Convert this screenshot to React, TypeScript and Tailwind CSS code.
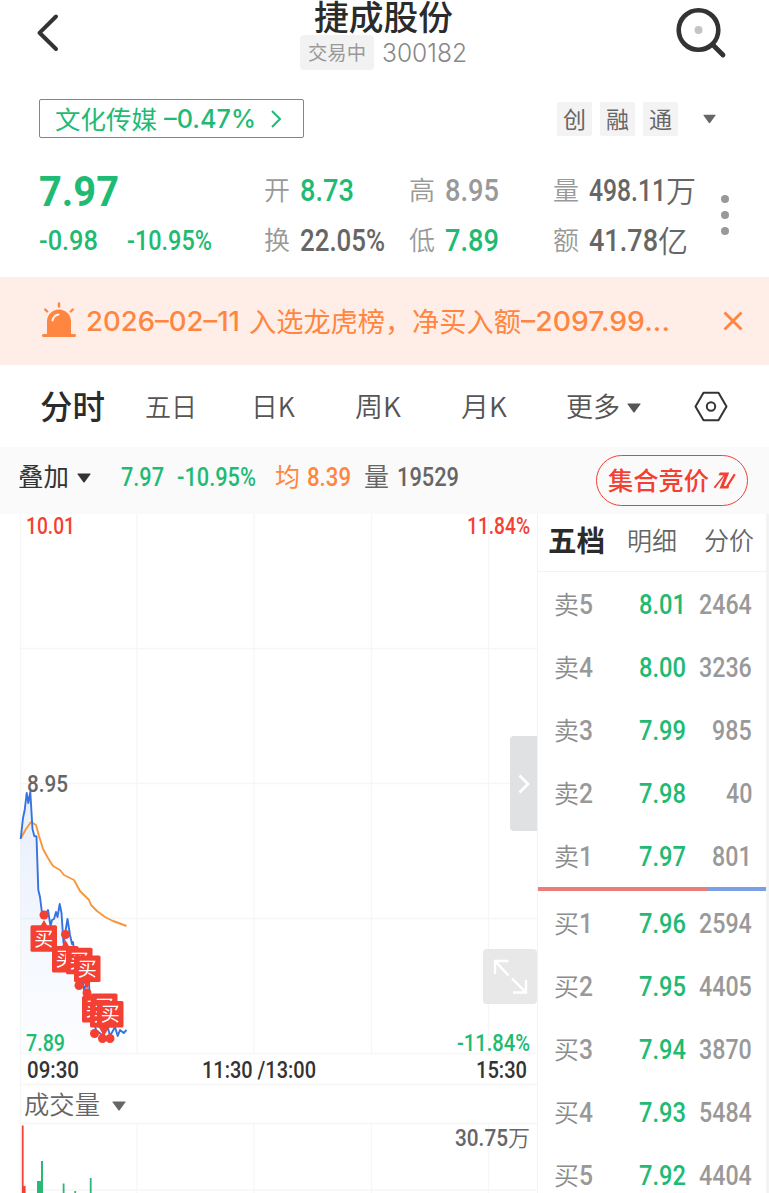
import { useLayoutEffect, useRef, useState, type ReactNode } from "react";

/* Text set to a given width: the glyphs are condensed or widened to fill it. */
function Fit({ w, className = "", children }: { w: number; className?: string; children: ReactNode }) {
  const ref = useRef<HTMLSpanElement>(null);
  const [scale, setScale] = useState(1);
  useLayoutEffect(() => {
    if (ref.current && ref.current.offsetWidth) setScale(w / ref.current.getBoundingClientRect().width * scale);
  }, [w]);
  return (
    <span className={`block shrink-0 leading-none whitespace-nowrap ${className}`} style={{ width: w }}>
      <span ref={ref} className="inline-block origin-left" style={{ transform: `scaleX(${scale})` }}>
        {children}
      </span>
    </span>
  );
}

const DIN = "font-['Roboto','Noto_Sans_CJK_SC',sans-serif]";
const NUM = `${DIN} font-medium`;
const LABEL = "pb-[3px] font-[350]";

function Caret({ className }: { className: string }) {
  return (
    <svg viewBox="0 0 14 10" className={className} fill="currentColor">
      <path d="M1 0.5h12q.8 0 .4.8L7.8 9q-.8 1-1.6 0L.6 1.3Q.2.5 1 .5Z" />
    </svg>
  );
}

function Header() {
  return (
    <header className="flex h-[84px] shrink-0 justify-between">
      <svg className="mt-[12px] ml-[36px] h-[42px] w-[26px]" viewBox="0 0 26 42" fill="none" stroke="#333" strokeWidth="4" strokeLinecap="round" strokeLinejoin="round">
        <path d="M20 4.500L3.500 20.800L20 37" />
      </svg>
      <div className="ml-[31px] flex flex-col items-center">
        <Fit w={139} className="mt-[-1px] text-[34px] font-medium text-[#2b2b2b]">捷成股份</Fit>
        <div className="mt-[2px] flex items-center">
          <span className="flex h-[35px] w-[74px] items-center justify-center rounded-[4px] bg-[#f2f2f2]">
            <Fit w={58} className="pb-[2px] text-[19px] text-[#999]">交易中</Fit>
          </span>
          <Fit w={85} className="mt-[2px] ml-[8px] font-['Inter'] text-[25px] font-light text-[#888]">300182</Fit>
        </div>
      </div>
      <svg className="mt-[4px] mr-[39px] h-[56px] w-[56px]" viewBox="0 0 56 56" fill="none" stroke="#333" strokeLinecap="round">
        <circle cx="24.500" cy="26" r="19.800" strokeWidth="4.600" />
        <path d="M38.500 40.500L49 51" strokeWidth="4.800" />
        <circle cx="24.500" cy="26" r="4" fill="#c4c4c4" stroke="none" />
      </svg>
    </header>
  );
}

function SectorRow() {
  return (
    <div className="flex h-[70px] shrink-0 items-center pb-[1px] pl-[39px]">
      <div className="flex h-[39px] w-[265px] items-center rounded-[2px] border-[1.5px] border-current pl-[15px] text-[#1fba73]">
        <Fit w={102} className="pb-[1px] text-[25px]">文化传媒</Fit>
        <Fit w={92} className="mt-[2px] ml-[7px] font-['Inter'] text-[25px] font-[450]">–0.47%</Fit>
        <svg className="mt-[1px] ml-[14px] h-[18px] w-[12px]" viewBox="0 0 12 18" fill="none" stroke="currentColor" strokeWidth="2">
          <path d="M2 1L10 9L2 17" />
        </svg>
      </div>
      <div className="ml-[253px] flex gap-[8px] text-[#666]">
        {["创", "融", "通"].map((t) => (
          <span key={t} className="flex h-[34px] w-[35px] items-center justify-center rounded-[2px] bg-[#f3f3f3] pb-[1px] text-[23px] leading-none">
            {t}
          </span>
        ))}
      </div>
      <Caret className="ml-[25px] h-[10px] w-[13px] text-[#666]" />
    </div>
  );
}

function Stat({ label, w, value, unit, color }: { label: string; w: number; value: string; unit?: string; color: string }) {
  return (
    <div className="flex h-[50px] items-center">
      <Fit w={26} className={`${LABEL} text-[26px] text-[#999]`}>{label}</Fit>
      <Fit w={w} className={`${NUM} ml-[10px] text-[32px] ${color}`}>{value}</Fit>
      {unit && <Fit w={30} className={`${LABEL} text-[30px] ${color}`}>{unit}</Fit>}
    </div>
  );
}

function Quote() {
  return (
    <section className="flex h-[123px] shrink-0 pt-[11px] pl-[39px]">
      <div className="w-[225px] pt-[1px] text-[#1fba73]">
        <div className="flex h-[50px] items-center">
          <Fit w={80} className={`${DIN} text-[43px] font-bold`}>7.97</Fit>
        </div>
        <div className="flex h-[50px] items-center">
          <Fit w={59} className={`${NUM} text-[27px]`}>-0.98</Fit>
          <Fit w={85} className={`${NUM} ml-[29px] text-[27px]`}>-10.95%</Fit>
        </div>
      </div>
      <div className="w-[145px]">
        <Stat label="开" w={54} value="8.73" color="text-[#1fba73]" />
        <Stat label="换" w={85} value="22.05%" color="text-[#666]" />
      </div>
      <div className="w-[144px]">
        <Stat label="高" w={54} value="8.95" color="text-[#999]" />
        <Stat label="低" w={54} value="7.89" color="text-[#1fba73]" />
      </div>
      <div className="w-[168px]">
        <Stat label="量" w={77} value="498.11" unit="万" color="text-[#666]" />
        <Stat label="额" w={69} value="41.78" unit="亿" color="text-[#666]" />
      </div>
      <div className="flex flex-col gap-[8px] pt-[30px]">
        <i className="size-[8px] rounded-full bg-[#999]" />
        <i className="size-[8px] rounded-full bg-[#999]" />
        <i className="size-[8px] rounded-full bg-[#999]" />
      </div>
    </section>
  );
}

function Banner() {
  return (
    <div className="flex h-[88px] shrink-0 items-center bg-[#ffeee7] pl-[41px] text-[#ff8640]">
      <svg className="mb-[2px] h-[36px] w-[36px]" viewBox="0 0 36 36" fill="currentColor">
        <rect x="1" y="32" width="34" height="3" rx="1.500" />
        <path d="M6 32.500V19.500a12 12 0 0 1 24 0v13z" />
        <path d="M11.500 18.500q1-5 6-6" stroke="#ffeee7" strokeWidth="2.200" strokeLinecap="round" fill="none" />
        <path d="M18 1.500v3M4.200 7.500l2 2M31.800 7.500l-2 2" stroke="currentColor" strokeWidth="2.400" strokeLinecap="round" />
      </svg>
      <Fit w={154} className="mt-[1px] ml-[9px] font-['Inter'] text-[27px] font-[450]">2026–02–11</Fit>
      <Fit w={136} className="ml-[9px] pb-[1px] text-[27px]">入选龙虎榜</Fit>
      <Fit w={27} className="pb-[1px] text-[27px]">，</Fit>
      <Fit w={109} className="pb-[1px] text-[27px]">净买入额</Fit>
      <Fit w={149} className="mt-[1px] font-['Inter'] text-[27px] font-[450]">–2097.99...</Fit>
      <svg className="ml-[53px] h-[20px] w-[20px]" viewBox="0 0 20 20" stroke="currentColor" strokeWidth="2.900">
        <path d="M1.500 1.500l17 17M18.500 1.500l-17 17" />
      </svg>
    </div>
  );
}

function PeriodTabs() {
  return (
    <nav className="flex h-[82px] shrink-0 items-center pt-[2px] pl-[40px] text-[#555]">
      <Fit w={65} className="pb-[3px] text-[33px] font-medium text-[#2b2b2b]">分时</Fit>
      <Fit w={52} className={`${LABEL} ml-[40px] text-[26px]`}>五日</Fit>
      <Fit w={44} className={`${LABEL} ml-[54px] text-[27px]`}>日K</Fit>
      <Fit w={46} className={`${LABEL} ml-[60px] text-[27px]`}>周K</Fit>
      <Fit w={46} className={`${LABEL} ml-[60px] text-[27px]`}>月K</Fit>
      <Fit w={54} className={`${LABEL} ml-[59px] text-[27px]`}>更多</Fit>
      <Caret className="mt-[1px] ml-[7px] h-[10px] w-[14px]" />
      <svg className="mb-[2px] ml-[53px] h-[31px] w-[34px]" viewBox="0 0 34 31" fill="none" stroke="#333" strokeWidth="2" strokeLinejoin="round">
        <path d="M9.500 1.700h15L32.500 15.500L24.500 29.200h-15L1.500 15.500Z" />
        <circle cx="17" cy="15.500" r="4.200" />
      </svg>
    </nav>
  );
}

function InfoBar() {
  return (
    <div className="flex h-[67px] shrink-0 items-center bg-[#fafafa] pl-[18px]">
      <div className="flex h-[60px] items-center pb-[7px]">
        <Fit w={51} className="pb-[3px] text-[25px] text-[#333]">叠加</Fit>
        <Caret className="mt-[2px] ml-[8px] h-[10px] w-[14px] text-[#333]" />
        <Fit w={43} className={`${NUM} ml-[30px] text-[26px] text-[#1fba73]`}>7.97</Fit>
        <Fit w={79} className={`${NUM} ml-[13px] text-[26px] text-[#1fba73]`}>-10.95%</Fit>
        <Fit w={25} className="ml-[19px] pb-[3px] text-[25px] text-[#ff8640]">均</Fit>
        <Fit w={44} className={`${NUM} ml-[7px] text-[26px] text-[#ff8640]`}>8.39</Fit>
        <Fit w={25} className="ml-[13px] pb-[3px] text-[25px] text-[#666]">量</Fit>
        <Fit w={62} className={`${NUM} ml-[8px] text-[26px] text-[#666]`}>19529</Fit>
      </div>
      <div className="mb-[1px] ml-[137px] flex h-[51px] w-[152px] items-center rounded-full border border-[#f43f33] pl-[11px] text-[#f43f33]">
        <Fit w={101} className="pb-[2px] text-[25px] font-medium">集合竞价</Fit>
        <svg className="ml-[4px] h-[19px] w-[24px]" viewBox="0 0 24 19" fill="currentColor">
          <path d="M0.500 16.200L10.500 4.200H5.500L6.800 1.500H16.200L10.800 15H16.200L15.200 17.500H6.500L11.500 5L2.300 17.200ZM20.800 2.800L22.800 3.800L14.200 17.200L12.500 15.800Z" />
        </svg>
      </div>
    </div>
  );
}

function Chart() {
  const v = [20.5, 137, 254, 371.5, 488.5];
  return (
    <div className="relative h-[679px] w-[537px] shrink-0">
      <svg className="block h-[679px] w-[537px]" viewBox="0 514 537 679" fill="none">
        <defs>
          <linearGradient id="area" x1="0" y1="790" x2="0" y2="1053" gradientUnits="userSpaceOnUse">
            <stop offset="0" stopColor="#3b78e7" stopOpacity="0.12" />
            <stop offset="1" stopColor="#3b78e7" stopOpacity="0.01" />
          </linearGradient>
        </defs>
        <g stroke="#f6f6f6" strokeWidth="1.300">
          {v.map((x) => <path key={x} d={`M${x} 514V1053M${x} 1123V1193`} />)}
          <path d="M20.500 1053V1123" />
          {[648.5, 783.5, 918.5, 1053.5, 1084.5, 1123.5, 1190].map((y) => <path key={y} d={`M20 ${y}H538`} />)}
        </g>
        <path fill="url(#area)" d={`${PRICE}V1053H20.700Z`} />
        <path stroke="#f9963b" strokeWidth="1.900" strokeLinejoin="round" d="M21 838L26 829L31 822L36 825L39 836L43 849L48 858L53 866L60 870L64 875L74 880L80 891L89 900L91 905L97 911L105 917L113 921L120 923.500L126.500 926" />
        <path stroke="#3673e0" strokeWidth="1.900" strokeLinejoin="round" d={PRICE} />
        <g fill="#f43f33">
          {DOTS.map(([x, y]) => <circle key={`${x}-${y}`} cx={x} cy={y} r="4.500" />)}
          <path d="M44 920l4 7h-8zM65.500 940l4 7h-8zM87 989l-4-8h8zM104 1036l-6-10h12z" />
        </g>
        {BUYS.map(([x, y]) => (
          <g key={`${x}-${y}`}>
            <rect x={x} y={y} width="26.500" height="26.500" rx="1.500" fill="#f43f33" />
            <text x={x + 13.2} y={y + 20.3} textAnchor="middle" fill="#fff" className="text-[19px]">买</text>
          </g>
        ))}
        <path fill="#f43f33" d="M21.800 1125.500h1.800V1186h2V1193h-3.800z" />
        <path fill="#2bb876" d="M37 1181h4v-20h2v32h-6zM62.700 1183.500h1.800v10h-1.800zM74.300 1191h1.800v2h-1.800zM89.800 1178h1.800v15h-1.800z" />
      </svg>
      <Fit w={49} className={`${NUM} absolute top-[0px] left-[26px] text-[24px] text-[#f43f33]`}>10.01</Fit>
      <Fit w={63} className={`${NUM} absolute top-[0px] left-[467px] text-[24px] text-[#f43f33]`}>11.84%</Fit>
      <Fit w={41} className={`${NUM} absolute top-[258px] left-[27px] text-[24px] text-[#666]`}>8.95</Fit>
      <Fit w={39} className={`${NUM} absolute top-[517px] left-[26px] text-[24px] text-[#1fba73]`}>7.89</Fit>
      <Fit w={73} className={`${NUM} absolute top-[517px] left-[457px] text-[24px] text-[#1fba73]`}>-11.84%</Fit>
      <Fit w={52} className={`${NUM} absolute top-[544px] left-[27px] text-[24px] text-[#333]`}>09:30</Fit>
      <Fit w={114} className={`${NUM} absolute top-[544px] left-[202px] text-[24px] text-[#333]`}>11:30 /13:00</Fit>
      <Fit w={51} className={`${NUM} absolute top-[544px] left-[476px] text-[24px] text-[#333]`}>15:30</Fit>
      <div className="absolute top-[577px] left-[24px] flex items-center text-[#666]">
        <Fit w={76} className={`${LABEL} text-[25px]`}>成交量</Fit>
        <Caret className="mt-[2px] ml-[12px] h-[10px] w-[14px]" />
      </div>
      <div className="absolute top-[611px] left-[455px] flex items-center text-[#666]">
        <Fit w={53} className={`${NUM} text-[24px]`}>30.75</Fit>
        <Fit w={22} className={`${LABEL} text-[22px]`}>万</Fit>
      </div>
      <button className="absolute top-[222px] left-[510px] flex h-[95px] w-[27px] items-center justify-center rounded-l-[4px] bg-[#e0e1e3]">
        <svg className="h-[20px] w-[12px]" viewBox="0 0 12 20" fill="none" stroke="#fff" strokeWidth="2.700">
          <path d="M1.500 1.500L10 10L1.500 18.500" />
        </svg>
      </button>
      <button className="absolute top-[435px] left-[483px] h-[55px] w-[54px] rounded-[4px] bg-[#e8e8e8]">
        <svg className="size-[55px]" viewBox="0 0 55 55" fill="none" stroke="#fff" strokeWidth="2.400">
          <path d="M25.500 26.500L12.500 12.500M12 25V12H25.500M29 29.500L42.500 43M43 31V43.500H30" />
        </svg>
      </button>
    </div>
  );
}

const PRICE =
  "M20.700 839L23 818L24.700 810L26.700 793L28.300 803L30.300 792L32.500 829L34.300 836L36.500 836.500L38.300 890L40 897L42 913L44 918L48 910L50.500 926L52 920L54 919L56 912L57.500 917L59.700 904L61.500 913L63.500 943L67.500 919L70 935L72 944L73 942L75 958L82 975L84 990L86 985L89 983L90 1000L94 1022L96 1030L102 1035L108 1028L110 1036L115 1027L117.700 1036L120 1030L123.700 1033L126.500 1030";
const DOTS = [[44, 915], [65.5, 934.5], [79, 985.5], [87, 993], [94.5, 1033.5], [102.5, 1038.5], [110, 1038.5]];
const BUYS = [[30.5, 925.3], [52, 946], [66, 947.8], [74, 955.5], [82, 996], [91, 993.5], [90, 1001], [97, 1001]];

const SELL = [["卖5", "8.01", "2464"], ["卖4", "8.00", "3236"], ["卖3", "7.99", "985"], ["卖2", "7.98", "40"], ["卖1", "7.97", "801"]];
const BUY = [["买1", "7.96", "2594"], ["买2", "7.95", "4405"], ["买3", "7.94", "3870"], ["买4", "7.93", "5484"], ["买5", "7.92", "4404"]];

function Level({ row: [name, price, volume] }: { row: string[] }) {
  return (
    <div className="flex h-[63px] shrink-0 items-center pt-[2px] pl-[16px] text-[#999]">
      <Fit w={25} className={`${LABEL} text-[25px] text-[#8c8c8c]`}>{name[0]}</Fit>
      <Fit w={14} className={`${NUM} text-[28px]`}>{name[1]}</Fit>
      <Fit w={47} className={`${NUM} ml-[46px] text-[28px] text-[#1fba73]`}>{price}</Fit>
      <div className="flex w-[66px] justify-end">
        <Fit w={volume.length * 13.2} className={`${NUM} text-[28px]`}>{volume}</Fit>
      </div>
    </div>
  );
}

function OrderBook() {
  return (
    <aside className="flex w-[232px] shrink-0 flex-col overflow-hidden border-r-[3px] border-l border-[#f3f3f3]">
      <div className="flex h-[58px] shrink-0 items-center border-b border-[#f3f3f3] pb-[3px] pl-[10px] text-[#666]">
        <Fit w={57} className="pb-[3px] text-[29px] font-bold text-[#2b2b2b]">五档</Fit>
        <Fit w={50} className={`${LABEL} ml-[22px] text-[25px]`}>明细</Fit>
        <Fit w={50} className={`${LABEL} ml-[27px] text-[25px]`}>分价</Fit>
      </div>
      {SELL.map((row) => <Level key={row[0]} row={row} />)}
      <div className="flex h-[4px] shrink-0">
        <div className="w-[169px] bg-[#ea7d78]" />
        <div className="grow bg-[#7b9fe4]" />
      </div>
      {BUY.map((row) => <Level key={row[0]} row={row} />)}
    </aside>
  );
}

export default function App() {
  return (
    <main className="flex h-[1193px] w-[769px] flex-col overflow-hidden bg-white font-['Noto_Sans_CJK_SC',sans-serif]">
      <Header />
      <SectorRow />
      <Quote />
      <Banner />
      <PeriodTabs />
      <InfoBar />
      <div className="flex min-h-0 grow">
        <Chart />
        <OrderBook />
      </div>
    </main>
  );
}
